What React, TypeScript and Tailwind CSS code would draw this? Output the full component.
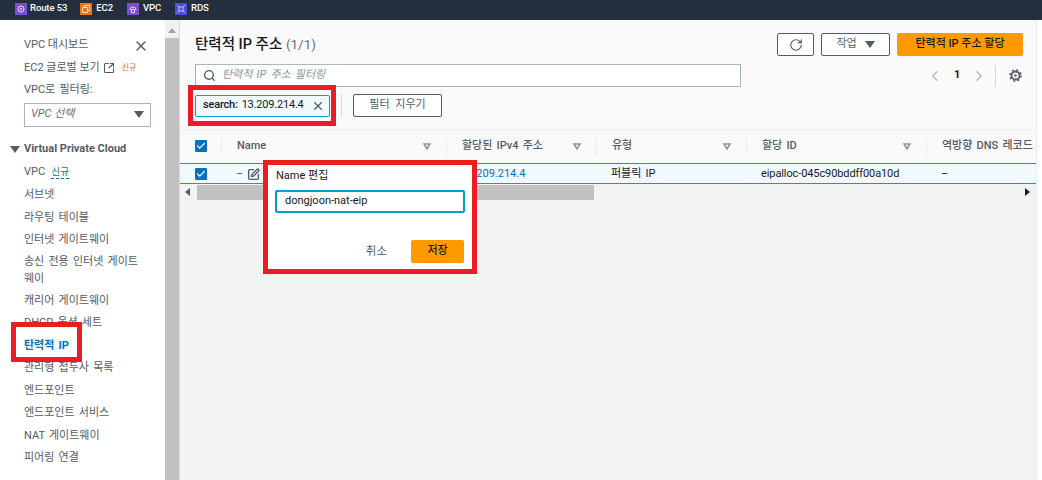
import { RotateCw, ChevronLeft, ChevronRight, Search, X, SquarePen, SquareArrowOutUpRight, Check } from "lucide-react";

const font = "[font-family:Roboto,'Noto_Sans_CJK_KR',sans-serif]";

function Svc({ color, kind }: { color: string; kind: string }) {
  return (
    <svg width="12" height="12" viewBox="0 0 12 12" className="shrink-0">
      <rect width="12" height="12" fill={color} />
      {kind === "route" && <circle cx="6" cy="6" r="3" fill="none" stroke="#fff" strokeWidth="1" opacity="0.8" />}
      {kind === "route" && <circle cx="6" cy="6" r="1" fill="#fff" opacity="0.8" />}
      {kind === "ec2" && <path d="M2.5 4.5h5v5h-5zM4.5 4.5v-2h5v5h-2" fill="none" stroke="#fff" strokeWidth="0.9" opacity="0.85" />}
      {kind === "vpc" && <path d="M3 7a3 3 0 1 1 6 0M4.5 6.5h3v3h-3z" fill="none" stroke="#fff" strokeWidth="0.9" opacity="0.85" />}
      {kind === "rds" && <path d="M2 2l2 2M10 2L8 4M2 10l2-2M10 10L8 8M4 4h4v4H4z" fill="none" stroke="#fff" strokeWidth="0.9" opacity="0.7" />}
    </svg>
  );
}

function Sort() {
  return (
    <svg width="8" height="7" viewBox="0 0 8 7" className="shrink-0">
      <path d="M1 1h6L4 6z" fill="none" stroke="#879596" strokeWidth="1.5" />
    </svg>
  );
}

function Caret({ className = "" }: { className?: string }) {
  return (
    <svg width="10" height="7" viewBox="0 0 10 7" className={className}>
      <path d="M0 0h10L5 7z" fill="#545b64" />
    </svg>
  );
}

function Gear() {
  return (
    <svg width="13" height="13" viewBox="0 0 13 13" className="ml-[13px]">
      <circle cx="6.5" cy="6.5" r="4" fill="none" stroke="#545b64" strokeWidth="1.8" />
      <circle cx="6.5" cy="6.5" r="5.6" fill="none" stroke="#545b64" strokeWidth="1.4" strokeDasharray="2.2 2.2" />
      <circle cx="6.5" cy="6.5" r="1.2" fill="#545b64" />
    </svg>
  );
}

function Box() {
  return (
    <span className="flex h-[12px] w-[12px] items-center justify-center rounded-[1px] bg-[#0073bb]">
      <Check size={10} strokeWidth={3} color="#fff" />
    </span>
  );
}

function NavItem({ children, className = "" }: { children: React.ReactNode; className?: string }) {
  return <div className={`flex h-[22.5px] items-center whitespace-pre ${className}`}>{children}</div>;
}

function Head({ w, label, sort = true }: { w: string; label: string; sort?: boolean }) {
  return (
    <div className={`flex h-[18px] items-center justify-between border-r border-[#eaeded] pl-[15px] pr-[15px] ${w}`}>
      <span className="whitespace-nowrap">{label}</span>
      {sort && <Sort />}
    </div>
  );
}

export default function App() {
  return (
    <div className={`relative flex h-[480px] w-[1042px] flex-col overflow-hidden bg-white text-[11px] text-[#545b64] [word-spacing:1.5px] ${font}`}>
      <header className="flex h-[20px] shrink-0 items-center bg-[#232f3e] pb-[3px] pl-[15px] text-[9.5px] font-medium tracking-[-0.1px] text-white [word-spacing:0]">
        <div className="flex items-center gap-[3px]"><Svc color="#7b4fd0" kind="route" />Route 53</div>
        <div className="ml-[13px] flex items-center gap-[4px]"><Svc color="#e8771c" kind="ec2" />EC2</div>
        <div className="ml-[14px] flex items-center gap-[4px]"><Svc color="#7b4fd0" kind="vpc" />VPC</div>
        <div className="ml-[14px] flex items-center gap-[4px]"><Svc color="#4a50dc" kind="rds" />RDS</div>
      </header>

      <div className="flex min-h-0 flex-1">
        <aside className="relative w-[165px] shrink-0 pl-[24px] pt-[12px]">
          <NavItem className="mt-[2px] [word-spacing:0]">VPC 대시보드</NavItem>
          <NavItem className="gap-[3px] [word-spacing:0]">
            EC2 글로벌 보기
            <SquareArrowOutUpRight size={12} strokeWidth={2.2} color="#545b64" />
            <span className="ml-[4px] text-[8px] text-[#ec7211]">신규</span>
          </NavItem>
          <NavItem>VPC로 필터링:</NavItem>
          <div className="mt-[1px] flex h-[24px] w-[127px] items-center justify-between border border-[#aab7b8] pl-[6px] pr-[6px] italic text-[#687078] [word-spacing:0]">
            VPC 선택
            <Caret />
          </div>
          <div className="mt-[12px] flex h-[22px] items-center gap-[4px] font-bold [word-spacing:0]">
            <Caret className="-ml-[14px]" />
            Virtual Private Cloud
          </div>
          <NavItem className="gap-[2px]">
            VPC <span className="border-b border-dashed border-[#0073bb] text-[9.6px] leading-[13px] text-[#0073bb]">신규</span>
          </NavItem>
          <NavItem className="mt-[1px]">서브넷</NavItem>
          <NavItem>라우팅 테이블</NavItem>
          <NavItem>인터넷 게이트웨이</NavItem>
          <div className="pb-[3px] pt-[1px] leading-[17px]">송신 전용 인터넷 게이트<br />웨이</div>
          <NavItem>캐리어 게이트웨이</NavItem>
          <NavItem>DHCP 옵션 세트</NavItem>
          <NavItem className="font-bold text-[#0073bb]">탄력적 IP</NavItem>
          <NavItem>관리형 접두사 목록</NavItem>
          <NavItem>엔드포인트</NavItem>
          <NavItem>엔드포인트 서비스</NavItem>
          <NavItem>NAT 게이트웨이</NavItem>
          <NavItem>피어링 연결</NavItem>
          <X size={16} strokeWidth={2} color="#545b64" className="absolute left-[133px] top-[18px]" />
        </aside>

        <div className="flex w-[14px] shrink-0 flex-col bg-[#f1f1f1]">
          <div className="flex h-[18px] items-end justify-center pb-[5px]">
            <svg width="8" height="5" viewBox="0 0 8 5"><path d="M0 5L4 0l4 5z" fill="#a3a3a3" /></svg>
          </div>
          <div className="flex-1 bg-[#c1c1c1]" />
        </div>

        <main className="flex min-w-0 flex-1 border-l border-[#d5dbdb] bg-white">
          <div className="flex w-[857px] shrink-0 flex-col border-r border-[#eaeded] bg-[#f2f3f3]">
            <div className="h-[109px] shrink-0 bg-[#fafafa] pl-[15px]">
              <div className="flex h-[44px] items-start justify-between pr-[13px]">
                <h1 className="mt-[11px] whitespace-nowrap text-[14.5px] font-medium leading-[26px] text-[#16191f] [word-spacing:0]">
                  탄력적 IP 주소 <span className="text-[13.5px] font-normal text-[#687078]">(1/1)</span>
                </h1>
                <div className="mt-[13px] flex gap-[7px]">
                  <button className="flex h-[23px] w-[37px] items-center justify-center rounded-[2px] border border-[#545b64] bg-white">
                    <RotateCw size={14} strokeWidth={2} color="#545b64" />
                  </button>
                  <button className="flex h-[23px] w-[69px] items-center justify-center gap-[8px] rounded-[2px] border border-[#545b64] bg-white">
                    작업 <Caret />
                  </button>
                  <button className="flex h-[23px] w-[126px] items-center justify-center rounded-[2px] bg-[#ff9900] font-medium text-[#16191f]">
                    탄력적 IP 주소 할당
                  </button>
                </div>
              </div>
              <div className="flex items-center">
                <div className="flex h-[23px] w-[546px] items-center gap-[6px] border border-[#aab7b8] bg-white pl-[7px] italic text-[#879596]">
                  <Search size={13} strokeWidth={2.5} color="#545b64" />
                  탄력적 IP 주소 필터링
                </div>
                <div className="ml-[185px] flex items-center">
                  <ChevronLeft size={18} strokeWidth={1.5} color="#aab7b8" />
                  <span className="mx-[10px] font-bold text-[#16191f]">1</span>
                  <ChevronRight size={18} strokeWidth={1.5} color="#aab7b8" />
                  <span className="ml-[7px] h-[22px] border-l border-[#d5dbdb]" />
                  <Gear />
                </div>
              </div>
              <div className="mt-[7px] flex items-center">
                <div className="flex h-[22px] w-[135px] items-center gap-[4px] rounded-[2px] border border-[#00a1c9] bg-[#f1faff] pl-[7px] tracking-[-0.2px] text-[#16191f]">
                  <b className="font-medium">search:</b> 13.209.214.4
                  <X size={14} strokeWidth={2} color="#545b64" className="ml-[3px]" />
                </div>
                <span className="ml-[11px] h-[23px] border-l border-[#d5dbdb]" />
                <button className="ml-[11px] h-[23px] w-[89px] rounded-[2px] border border-[#545b64] bg-white [word-spacing:3px]">필터 지우기</button>
              </div>
            </div>

            <div className="flex h-[34px] shrink-0 items-center border-t border-[#eaeded] bg-[#fafafa] font-medium">
              <div className="-mt-[2px] flex h-[18px] w-[41px] items-center pl-[15px]"><Box /></div>
              <div className="h-[18px] border-r border-[#eaeded]" />
              <Head w="w-[225px] pl-[15px]" label="Name" />
              <Head w="w-[150px]" label="할당된 IPv4 주소" />
              <Head w="w-[150px]" label="유형" />
              <Head w="w-[180px]" label="할당 ID" />
              <div className="whitespace-nowrap pl-[15px]">역방향 DNS 레코드</div>
            </div>

            <div className="flex h-[21px] shrink-0 items-center border-y border-[#00a1c9] bg-[#f1faff] text-[#16191f]">
              <div className="w-[41px] pl-[15px]"><Box /></div>
              <div className="flex w-[225px] items-center gap-[4px] pl-[15px] pt-[1px] text-[#545b64]">
                – <SquarePen size={13} strokeWidth={2.5} color="#545b64" />
                <svg width="5" height="7" viewBox="0 0 5 7"><path d="M3 .5L.5 3.5 3 6.5" fill="none" stroke="#d5dbdb" /></svg>
              </div>
              <div className="w-[150px] pl-[15px] pt-[1px] text-[#0073bb]">13.209.214.4</div>
              <div className="w-[150px] pl-[15px] pt-[1px]">퍼블릭 IP</div>
              <div className="w-[180px] pl-[15px] pt-[1px] tracking-[-0.1px]">eipalloc-045c90bddff00a10d</div>
              <div className="pl-[15px] pt-[1px]">–</div>
            </div>

            <div className="flex h-[16px] shrink-0 items-center">
              <svg width="5" height="8" viewBox="0 0 5 8" className="ml-[5px]"><path d="M5 0L0 4l5 4z" fill="#545b64" /></svg>
              <div className="ml-[7px] h-[15px] w-[397px] bg-[#c1c1c1]" />
              <svg width="5" height="8" viewBox="0 0 5 8" className="ml-[431px]"><path d="M0 0l5 4-5 4z" fill="#16191f" /></svg>
            </div>
          </div>
        </main>
      </div>

      {/* annotations lying over the page */}
      <div className="absolute left-[11px] top-[322px] h-[40px] w-[71px] border-[5px] border-[#ed1c24]" />
      <div className="absolute left-[188px] top-[85px] h-[41px] w-[148px] border-[5px] border-[#ed1c24]" />

      <div className="absolute left-[263px] top-[160px] flex h-[114px] w-[214px] flex-col border-[5px] border-[#ed1c24] bg-white px-[7px]">
        <div className="mt-[3px] h-[16px] pl-[1px] leading-[16px] text-[#16191f] [word-spacing:0]">Name 편집</div>
        <div className="mt-[6px] flex h-[23px] w-[190px] items-center rounded-[2px] border-2 border-[#00a1c9] pl-[8px] text-[#16191f]">dongjoon-nat-eip</div>
        <div className="mt-[27px] flex items-center justify-end gap-[24px] pr-[1px]">
          <span className="text-[11.5px]">취소</span>
          <button className="h-[23px] w-[53px] rounded-[2px] bg-[#ff9900] font-medium text-[#16191f]">저장</button>
        </div>
      </div>
    </div>
  );
}
